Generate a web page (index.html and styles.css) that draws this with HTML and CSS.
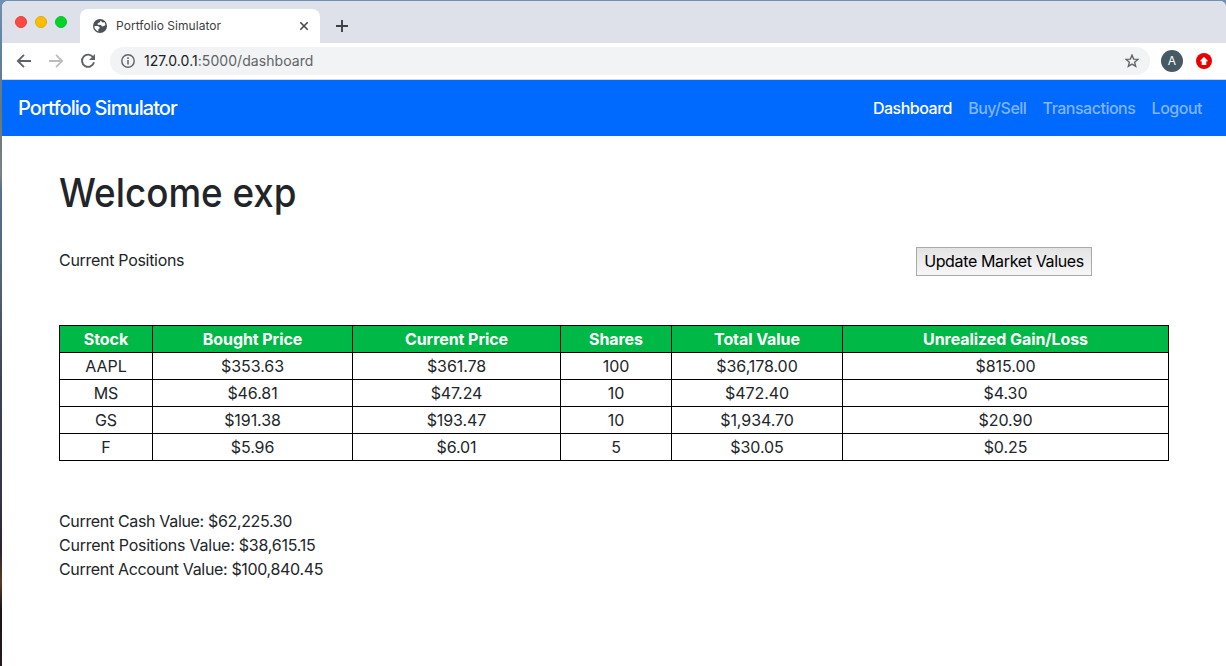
FILE: index.html
```html
<!DOCTYPE html>
<html lang="en">
<head>
<meta charset="utf-8">
<title>Portfolio Simulator</title>
<link rel="stylesheet" href="styles.css">
</head>
<body>
<div class="window">
  <div class="tabstrip">
    <div class="lights"><i class="light red"></i><i class="light yellow"></i><i class="light green"></i></div>
    <div class="tab">
      <svg class="globe" width="14" height="14" viewBox="0 0 14 14"><circle cx="7" cy="7" r="7" fill="#4b5157"/><path d="M7.8 1.5 6.6 3.5 4.8 4.1 4.6 5.7 8 5.9 9 7.4 11 7.1 12.5 6 11.6 3.3 9.3 3.5Z" fill="#fff"/><path d="M1.4 6.9 4.9 7 6.7 8.3 6.5 9.5 5.4 10 5.3 12.4 3 11 1.6 9Z" fill="#fff"/></svg>
      <span class="tab-title">Portfolio Simulator</span>
      <svg class="close" width="10" height="10" viewBox="0 0 10 10"><path d="M1.3 1.3 8.7 8.7M8.7 1.3 1.3 8.7" stroke="#45494d" stroke-width="1.6"/></svg>
    </div>
    <svg class="plus" width="12" height="12" viewBox="0 0 12 12"><path d="M6 0V12M0 6H12" stroke="#3c4043" stroke-width="1.9"/></svg>
  </div>
  <div class="toolbar">
    <svg class="nav-icon" width="16" height="16" viewBox="0 0 16 16" fill="none" stroke="#5f6368" stroke-width="1.8"><path d="M15 8H2M8 1.8 1.8 8 8 14.2"/></svg>
    <svg class="nav-icon" width="16" height="16" viewBox="0 0 16 16" fill="none" stroke="#babcbe" stroke-width="1.8"><path d="M1 8H14M8 1.8 14.2 8 8 14.2"/></svg>
    <svg class="nav-icon" width="16" height="16" viewBox="0 0 16 16"><path d="M13.2 4.4A6.1 6.1 0 1 0 14 9.3" fill="none" stroke="#5f6368" stroke-width="1.9"/><path d="M15 1V7H9Z" fill="#5f6368"/></svg>
    <div class="omnibox">
      <svg width="14" height="14" viewBox="0 0 14 14"><circle cx="7" cy="7" r="6.2" fill="none" stroke="#5f6368" stroke-width="1.4"/><path d="M7 6V10.6M7 3.3V4.9" stroke="#5f6368" stroke-width="1.5"/></svg>
      <span class="url"><span class="host">127.0.0.1</span><span class="path">:5000/dashboard</span></span>
      <svg class="star" width="14" height="14" viewBox="0 0 14 14"><path d="M7 1.1 8.6 5.1 12.9 5.4 9.6 8.2 10.7 12.4 7 10.1 3.3 12.4 4.4 8.2 1.1 5.4 5.4 5.1Z" fill="none" stroke="#5f6368" stroke-width="1.35"/></svg>
    </div>
    <div class="avatar">A</div>
    <svg class="update" width="16" height="16" viewBox="0 0 16 16"><circle cx="8" cy="8" r="8" fill="#eb0000"/><path d="M8 3.8 12.2 8.3H10.3V12H5.7V8.3H3.8Z" fill="#fff"/></svg>
  </div>
  <nav class="navbar">
    <span class="brand">Portfolio Simulator</span>
    <div class="links">
      <span class="link active">Dashboard</span><span class="link">Buy/Sell</span><span class="link">Transactions</span><span class="link">Logout</span>
    </div>
  </nav>
  <main class="content">
    <h1>Welcome exp</h1>
    <div class="position-row">
      <span class="caption">Current Positions</span>
      <button class="refresh">Update Market Values</button>
    </div>
    <table class="positions">
      <colgroup><col class="c1"><col class="c2"><col class="c3"><col class="c4"><col class="c5"><col class="c6"></colgroup>
      <tr><th>Stock</th><th>Bought Price</th><th>Current Price</th><th>Shares</th><th>Total Value</th><th>Unrealized Gain/Loss</th></tr>
      <tr><td>AAPL</td><td>$353.63</td><td>$361.78</td><td>100</td><td>$36,178.00</td><td>$815.00</td></tr>
      <tr><td>MS</td><td>$46.81</td><td>$47.24</td><td>10</td><td>$472.40</td><td>$4.30</td></tr>
      <tr><td>GS</td><td>$191.38</td><td>$193.47</td><td>10</td><td>$1,934.70</td><td>$20.90</td></tr>
      <tr><td>F</td><td>$5.96</td><td>$6.01</td><td>5</td><td>$30.05</td><td>$0.25</td></tr>
    </table>
    <div class="totals">
      <div>Current Cash Value: $62,225.30</div>
      <div class="invested">Current Positions Value: $38,615.15</div>
      <div>Current Account Value: $100,840.45</div>
    </div>
  </main>
</div>
</body>
</html>
```
FILE: styles.css
```css
* { box-sizing: border-box; }
body {
  margin: 0;
  height: 666px;
  padding: 1px 0 0 2px;
  overflow: hidden;
  background: linear-gradient(#6f8fb4 0, #5f7fa0 60px, #6d7673 110px, #7b8187 175px, #56708f 190px, #526479 280px, #3d4257 380px, #35334a 500px, #2b2430 550px, #5b3c22 582px, #1c1418 610px, #241a1e 666px);
  font-family: Inter, "Liberation Sans", sans-serif;
  font-size: 16px;
  line-height: 24px;
  color: #212529;
}
.window {
  height: 665px;
  border-radius: 6px 6px 0 0;
  overflow: hidden;
  background: #fff;
}
.tabstrip {
  display: flex;
  height: 42px;
  background: #dee1e9;
}
.lights { display: flex; gap: 8px; padding: 15px 0 0 13px; width: 78px; }
.light { width: 12px; height: 12px; border-radius: 50%; }
.red { background: #ff4a44; border: 1px solid #e4403b; }
.yellow { background: #ffbd00; border: 1px solid #e2a610; }
.green { background: #00d42b; border: 1px solid #10bd2c; }
.tab {
  display: flex;
  align-items: center;
  width: 240px;
  height: 34px;
  margin-top: 8px;
  padding: 0 11px 0 13px;
  border-radius: 8px 8px 0 0;
  background: #fff;
}
.tab-title { margin-left: 9px; font-size: 12px; letter-spacing: 0.05px; color: #3c4043; }
.close { margin-left: auto; }
.plus { margin: 19px 0 0 16px; }
.toolbar {
  display: flex;
  align-items: center;
  height: 37px;
  padding-left: 14px;
  border-bottom: 1px solid #d5d6d8;
}
.nav-icon { margin-right: 16px; }
.omnibox {
  display: flex;
  align-items: center;
  width: 1040px;
  height: 28px;
  margin-left: -2px;
  padding: 0 11px;
  border-radius: 14px;
  background: #f1f3f4;
}
.url { margin-left: 9px; font-size: 14px; letter-spacing: 0.06px; color: #5f6368; }
.host { color: #202124; }
.star { margin-left: auto; }
.avatar {
  width: 22px;
  height: 22px;
  margin-left: 11px;
  border-radius: 50%;
  background: #455a64;
  color: #fff;
  font-size: 12px;
  line-height: 22px;
  text-align: center;
}
.update { margin-left: 13px; }
.navbar {
  display: flex;
  align-items: center;
  justify-content: space-between;
  height: 56px;
  padding: 0 24px 0 16px;
  background: #006aff;
  color: #fff;
}
.brand { font-size: 20px; font-weight: 500; line-height: 30px; letter-spacing: -0.92px; }
.links { display: flex; gap: 16.2px; font-weight: 500; letter-spacing: -0.49px; }
.link { color: #80b5ff; }
.active { color: #fff; }
.content { padding: 33px 55px 0 57px; }
h1 { margin: 0; font-size: 40px; font-weight: 500; line-height: 48px; transform: scaleX(0.92); transform-origin: left; }
.position-row { display: flex; justify-content: space-between; height: 77px; margin-top: 31px; padding-right: 79px; }
.caption { letter-spacing: -0.3px; }
.refresh {
  width: 176px;
  height: 29px;
  margin-top: -1px;
  padding: 0 0 2px;
  border: 1px solid #a9a9a9;
  border-radius: 0;
  background: linear-gradient(#e4e4e4, #f6f6f6);
  color: #000;
  font: 16px/24px Inter, sans-serif;
  letter-spacing: -0.36px;
  white-space: nowrap;
}
.positions { width: 1110px; table-layout: fixed; border-collapse: collapse; text-align: center; letter-spacing: -0.07px; }
.positions th, .positions td { height: 27px; padding: 1px; border: 1px solid #000; }
.positions th { background: #00b845; color: #fff; font-weight: 700; }
.c1 { width: 93px; }
.c2 { width: 200px; }
.c3 { width: 208px; }
.c4 { width: 111px; }
.c5 { width: 171px; }
.c6 { width: 326px; }
.totals { margin-top: 48px; letter-spacing: -0.34px; }
.invested { letter-spacing: -0.24px; }
```
